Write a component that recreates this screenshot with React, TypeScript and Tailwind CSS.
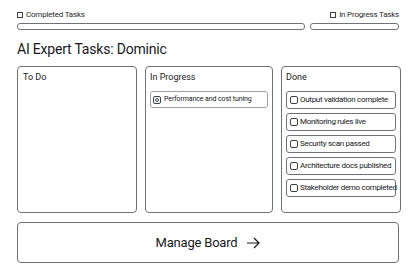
import React from 'react';

const done = [
  'Output validation complete',
  'Monitoring rules live',
  'Security scan passed',
  'Architecture docs published',
  'Stakeholder demo completed',
];

const Box: React.FC<{ dot?: boolean }> = ({ dot }) => (
  <span className="w-[8px] h-[8px] border border-zinc-700 rounded-[2px] flex items-center justify-center shrink-0">
    {dot && <span className="w-[4px] h-[4px] border border-zinc-700 rounded-full"></span>}
  </span>
);

export default function App() {
  return (
    <div className="w-[416px] h-[277px] bg-white px-[17px] pt-[10px] text-zinc-900 font-['Roboto',sans-serif] antialiased overflow-hidden">
      <div className="flex justify-between text-[8px] tracking-[-0.2px] leading-[10px] text-zinc-800">
        <div className="flex items-center gap-[3px]">
          <span className="w-[6px] h-[6px] border border-zinc-700"></span>
          <span>Completed Tasks</span>
        </div>
        <div className="flex items-center gap-[3px]">
          <span className="w-[6px] h-[6px] border border-zinc-700"></span>
          <span>In Progress Tasks</span>
        </div>
      </div>
      <div className="flex gap-[5px] mt-[3px]">
        <div className="w-[288px] h-[7px] border border-zinc-500 rounded-[3px]"></div>
        <div className="flex-1 h-[7px] border border-zinc-500 rounded-[3px]"></div>
      </div>

      <h1 className="text-[14px] leading-[20px] mt-[9px] tracking-[-0.2px] text-zinc-900">AI Expert Tasks: Dominic</h1>

      <div className="grid grid-cols-[120px_128px_120px] gap-[8px] mt-[7px] h-[147px]">
        <div className="border border-zinc-500 rounded-[4px] px-[5px] pt-[4px]">
          <div className="text-[9px] leading-[12px]">To Do</div>
        </div>
        <div className="border border-zinc-500 rounded-[4px] px-[4px] pt-[4px]">
          <div className="text-[9px] leading-[12px]">In Progress</div>
          <div className="mt-[8px] h-[17px] border border-zinc-400 rounded-[3px] flex items-center gap-[3px] px-[2px] text-[7px] tracking-[-0.1px] whitespace-nowrap">
            <Box dot />
            <span>Performance and cost tuning</span>
          </div>
        </div>
        <div className="border border-zinc-500 rounded-[4px] px-[4px] pt-[4px]">
          <div className="text-[9px] leading-[12px]">Done</div>
          <div className="flex flex-col gap-[4px] mt-[8px]">
            {done.map((t) => (
              <div key={t} className="h-[18px] border border-zinc-500 rounded-[3px] flex items-center gap-[2px] px-[3px] text-[8px] tracking-[-0.3px] whitespace-nowrap">
                <Box />
                <span>{t}</span>
              </div>
            ))}
          </div>
        </div>
      </div>

      <button className="mt-[9px] w-full h-[41px] border border-zinc-500 rounded-[4px] flex items-center justify-center gap-[9px] text-[13px] tracking-[-0.2px] text-zinc-900">
        <span>Manage Board</span>
        <svg width="14" height="12" viewBox="0 0 14 12" fill="none" stroke="currentColor" strokeWidth="1.2">
          <path d="M1 6h12M8 1l5 5-5 5" />
        </svg>
      </button>
    </div>
  );
}
